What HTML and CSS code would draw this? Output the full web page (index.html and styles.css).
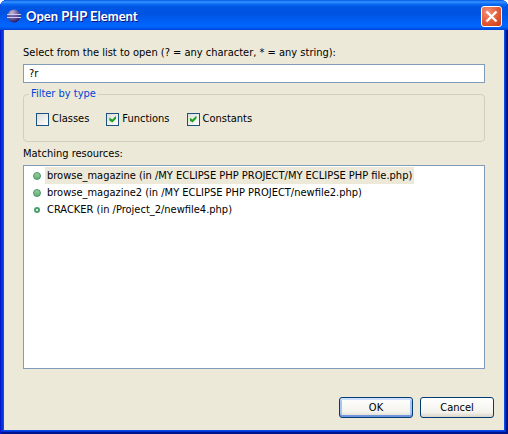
FILE: index.html
```
<!DOCTYPE html>
<html lang="en">
<head>
<meta charset="utf-8">
<title>Open PHP Element</title>
<link rel="stylesheet" href="styles.css">
</head>
<body>
<main class="window">
  <header class="titlebar">
    <svg class="app-icon" viewBox="0 0 16 16" aria-hidden="true">
      <defs>
        <radialGradient id="orb" cx="35%" cy="25%" r="75%">
          <stop offset="0" stop-color="#c4b8cc"/>
          <stop offset="0.5" stop-color="#766cac"/>
          <stop offset="1" stop-color="#2c1c68"/>
        </radialGradient>
      </defs>
      <circle cx="8" cy="8" r="6.5" fill="url(#orb)"/>
      <path d="M1 6.5h14M1 9.5h14" stroke="#d0cdf0" stroke-width="1"/>
      <path d="M2 8h12" stroke="#4c4494" stroke-width="1"/>
    </svg>
    <h1 class="title">Open PHP Element</h1>
    <button class="close" type="button" aria-label="Close">
      <svg class="close-icon" viewBox="0 0 19 19" aria-hidden="true">
        <path d="M4.500 4.500l10 10M14.500 4.500l-10 10" stroke="#fff" stroke-width="2.400"/>
      </svg>
    </button>
  </header>
  <form class="content">
    <label class="caption" for="pattern">Select from the list to open (? = any character, * = any string):</label>
    <input class="pattern" id="pattern" type="text" value="?r">
    <fieldset class="filter">
      <legend class="legend">Filter by type</legend>
      <div class="options">
        <label class="option"><input class="check" type="checkbox">Classes</label>
        <label class="option"><input class="check" type="checkbox" checked>Functions</label>
        <label class="option"><input class="check" type="checkbox" checked>Constants</label>
      </div>
    </fieldset>
    <div class="caption" id="matching">Matching resources:</div>
    <ul class="results" role="listbox" aria-labelledby="matching">
      <li class="result" role="option" aria-selected="true"><span class="marker"><span class="dot"></span></span><span class="name">browse_magazine (in /MY ECLIPSE PHP PROJECT/MY ECLIPSE PHP file.php)</span></li>
      <li class="result" role="option" aria-selected="false"><span class="marker"><span class="dot"></span></span><span class="name">browse_magazine2 (in /MY ECLIPSE PHP PROJECT/newfile2.php)</span></li>
      <li class="result" role="option" aria-selected="false"><span class="marker"><span class="ring"></span></span><span class="name">CRACKER (in /Project_2/newfile4.php)</span></li>
    </ul>
    <div class="actions">
      <button class="button default" type="button">OK</button>
      <button class="button" type="button">Cancel</button>
    </div>
  </form>
</main>
</body>
</html>
```
FILE: styles.css
```
* { box-sizing: border-box; }

body {
  margin: 0;
  background: #fff;
  color: #000;
  font: 11px/14px "DejaVu Sans Condensed", "DejaVu Sans", sans-serif;
}

.window {
  display: flex;
  flex-direction: column;
  min-height: 100vh;
  padding: 0 4px 4px;
  border-radius: 7px 7px 0 0;
  background: #0a4ee4;
  box-shadow: inset 1px 0 #0019cf, inset -2px -2px #00138c, inset 3px 0 #0831d9, inset -3px -3px #0030d8;
  overflow: hidden;
}

.titlebar {
  display: flex;
  align-items: center;
  gap: 4px;
  height: 30px;
  margin: 0 -4px;
  padding: 2px 6px 0;
  background: linear-gradient(#0058e6 0, #3a93ff 2px, #0b6cf5 4px, #0055e5 7px, #0053e1 14px, #0060f8 22px, #0066ff 26px, #005bf0 28px, #003dd7 30px);
}

.app-icon { width: 16px; height: 16px; }

.title {
  flex: 1;
  margin: 0;
  color: #fff;
  font: bold 13px/18px Lato, sans-serif;
  text-shadow: 1px 1px #0a1883;
}

.close {
  width: 21px;
  height: 21px;
  padding: 0;
  border: 1px solid #fff;
  border-radius: 3px;
  background: radial-gradient(circle at 30% 25%, #f09078, #e2552e 60%, #c83c14);
}

.close-icon { display: block; width: 19px; height: 19px; }

.content {
  display: flex;
  flex: 1;
  flex-direction: column;
  padding: 16px 19px 12px;
  background: #ece9d8;
}

.pattern {
  width: 100%;
  height: 19px;
  margin: 4px 0;
  padding: 0 5px;
  border: 1px solid #7f9db9;
  background: #fff;
  color: #000;
  font: inherit;
}

.filter {
  margin: 0 0 5px;
  padding: 11px 12px 15px;
  border: 1px solid #d0d0bf;
  border-radius: 4px;
}

.legend {
  margin-left: -7px;
  padding: 0 2px;
  color: #0046d5;
}

.options { display: flex; gap: 17px; }

.option { display: flex; align-items: center; gap: 3px; }

.check {
  width: 13px;
  height: 13px;
  margin: 0;
  border: 1px solid #1c5180;
  background: linear-gradient(135deg, #dcdcd7, #fff);
  appearance: none;
}

.check:checked::before {
  content: "";
  display: block;
  width: 7px;
  height: 7px;
  margin: 2px;
  background: #21a121;
  clip-path: polygon(0 28%, 43% 58%, 100% 0, 100% 42%, 43% 100%, 0 70%);
}

.results {
  flex: 1;
  margin: 4px 0 28px;
  padding: 1px;
  border: 1px solid #7f9db9;
  background: #fff;
  list-style: none;
}

.result { display: flex; height: 17px; line-height: 17px; }

.marker {
  display: flex;
  align-items: center;
  justify-content: center;
  width: 20px;
  padding-left: 4px;
}

.dot {
  width: 8px;
  height: 8px;
  border: 1px solid #3f9468;
  border-radius: 50%;
  background: linear-gradient(#9dcc9f, #62b078);
}

.ring {
  width: 6px;
  height: 6px;
  border: 2px solid #4aa06c;
  border-radius: 50%;
}

.name { padding: 0 2px; white-space: nowrap; }

.result[aria-selected="true"] .name { background: #ece9d8; }

.actions {
  display: flex;
  justify-content: flex-end;
  gap: 7px;
  margin-right: -9px;
}

.button {
  width: 74px;
  height: 21px;
  padding: 0;
  border: 1px solid #003c74;
  border-radius: 3px;
  background: linear-gradient(#fff, #f3f2ec 75%, #d9d4c8);
  color: #000;
  font: inherit;
}

.button.default { box-shadow: inset 0 2px #cee0fc, inset 0 -2px #7295e0, inset 2px 0 #a8c2f3, inset -2px 0 #a8c2f3; }
```
